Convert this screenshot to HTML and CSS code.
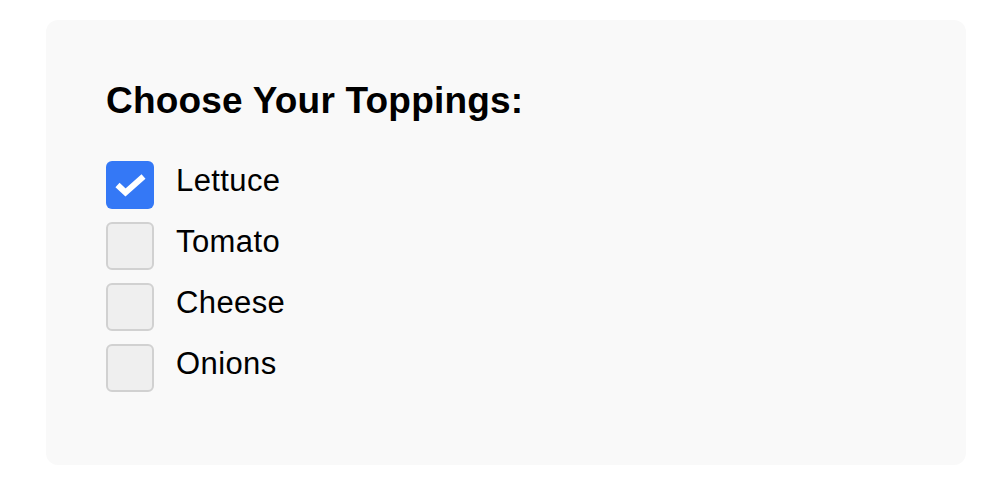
FILE: index.html
```html
<!DOCTYPE html>
<html>
<head>
<meta charset="utf-8">
<link rel="stylesheet" href="styles.css">
</head>
<body>
<div class="card">
  <h2 class="title">Choose Your Toppings:</h2>
  <ul class="list">
    <li class="row">
      <span class="box checked">
        <svg viewBox="0 0 48 48" width="48" height="48"><polyline points="11.5,24 19.5,31.5 37.5,15.5" fill="none" stroke="#fff" stroke-width="6"/></svg>
      </span>
      <span class="label">Lettuce</span>
    </li>
    <li class="row"><span class="box"></span><span class="label">Tomato</span></li>
    <li class="row"><span class="box"></span><span class="label">Cheese</span></li>
    <li class="row"><span class="box"></span><span class="label">Onions</span></li>
  </ul>
</div>
</body>
</html>
```

FILE: styles.css
```css
html, body {
  margin: 0;
  padding: 0;
  background: #ffffff;
}
body {
  font-family: "Liberation Sans", Arial, sans-serif;
  color: #000;
}
.card {
  box-sizing: border-box;
  width: 920px;
  height: 445px;
  margin: 20px 0 0 46px;
  padding: 61px 60px 0 60px;
  background: #f9f9f9;
  border-radius: 12px;
}
.title {
  margin: 0;
  font-size: 37px;
  line-height: 40px;
  font-weight: bold;
  letter-spacing: 0.2px;
}
.list {
  list-style: none;
  margin: 40px 0 0 0;
  padding: 0;
  display: flex;
  flex-direction: column;
  gap: 13px;
}
.row {
  display: flex;
  align-items: flex-start;
  gap: 22px;
}
.box {
  box-sizing: border-box;
  width: 48px;
  height: 48px;
  flex: none;
  border-radius: 6px;
  background: #efefef;
  border: 2px solid #d1d1d1;
}
.box.checked {
  background: #3478f6;
  border: none;
}
.box svg {
  display: block;
}
.label {
  font-size: 31px;
  line-height: 40px;
  letter-spacing: 0.4px;
}
```
